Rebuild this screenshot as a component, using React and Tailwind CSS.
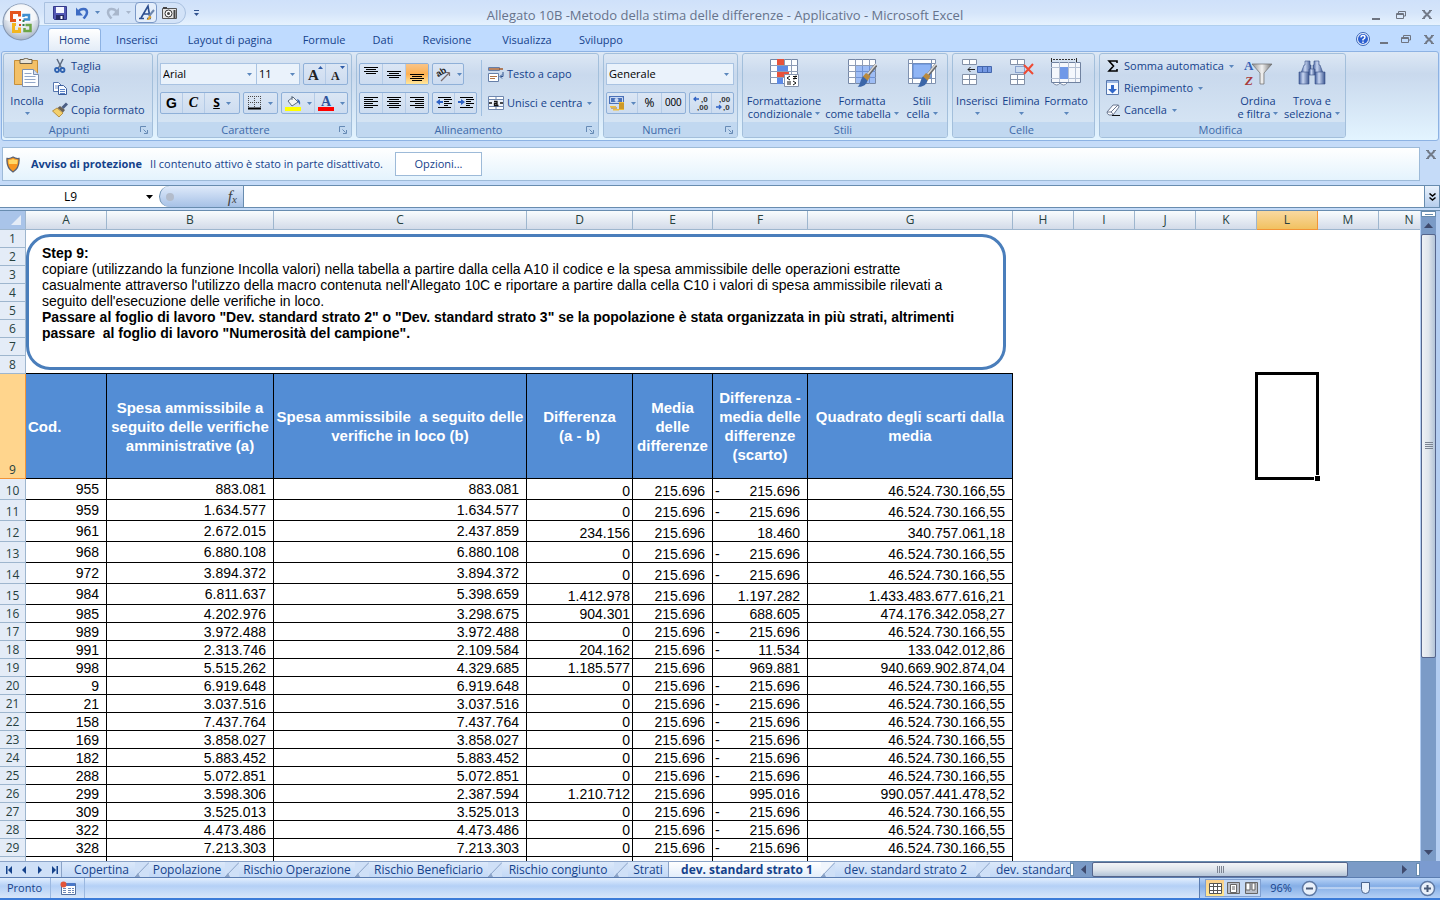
import clsx from 'clsx'

const COLUMNS = ['A', 'B', 'C', 'D', 'E', 'F', 'G', 'H', 'I', 'J', 'K', 'L', 'M', 'N']
const EMPTY_COLUMNS = COLUMNS.slice(7)

const ROWS = [
  ['955', '883.081', '883.081', '0', '-', '215.696', '46.524.730.166,55'],
  ['959', '1.634.577', '1.634.577', '0', '-', '215.696', '46.524.730.166,55'],
  ['961', '2.672.015', '2.437.859', '234.156', '', '18.460', '340.757.061,18'],
  ['968', '6.880.108', '6.880.108', '0', '-', '215.696', '46.524.730.166,55'],
  ['972', '3.894.372', '3.894.372', '0', '-', '215.696', '46.524.730.166,55'],
  ['984', '6.811.637', '5.398.659', '1.412.978', '', '1.197.282', '1.433.483.677.616,21'],
  ['985', '4.202.976', '3.298.675', '904.301', '', '688.605', '474.176.342.058,27'],
  ['989', '3.972.488', '3.972.488', '0', '-', '215.696', '46.524.730.166,55'],
  ['991', '2.313.746', '2.109.584', '204.162', '-', '11.534', '133.042.012,86'],
  ['998', '5.515.262', '4.329.685', '1.185.577', '', '969.881', '940.669.902.874,04'],
  ['9', '6.919.648', '6.919.648', '0', '-', '215.696', '46.524.730.166,55'],
  ['21', '3.037.516', '3.037.516', '0', '-', '215.696', '46.524.730.166,55'],
  ['158', '7.437.764', '7.437.764', '0', '-', '215.696', '46.524.730.166,55'],
  ['169', '3.858.027', '3.858.027', '0', '-', '215.696', '46.524.730.166,55'],
  ['182', '5.883.452', '5.883.452', '0', '-', '215.696', '46.524.730.166,55'],
  ['288', '5.072.851', '5.072.851', '0', '-', '215.696', '46.524.730.166,55'],
  ['299', '3.598.306', '2.387.594', '1.210.712', '', '995.016', '990.057.441.478,52'],
  ['309', '3.525.013', '3.525.013', '0', '-', '215.696', '46.524.730.166,55'],
  ['322', '4.473.486', '4.473.486', '0', '-', '215.696', '46.524.730.166,55'],
  ['328', '7.213.303', '7.213.303', '0', '-', '215.696', '46.524.730.166,55'],
]

const RIBBON_TABS = [
  ['Inserisci', 'w-[72px]'],
  ['Layout di pagina', 'w-[114px]'],
  ['Formule', 'w-[74px]'],
  ['Dati', 'w-[44px]'],
  ['Revisione', 'w-[84px]'],
  ['Visualizza', 'w-[76px]'],
  ['Sviluppo', 'w-[72px]'],
]

/* ---------- small drawings ---------- */

function Caret({ className = 'text-[#5b87bd]' }) {
  return (
    <svg className={clsx('shrink-0', className)} width="5" height="3" viewBox="0 0 5 3" aria-hidden="true">
      <path d="M0 0h5L2.5 3z" fill="currentColor" />
    </svg>
  )
}

function Icon({ w = 16, h = 16, children }) {
  return (
    <svg className="shrink-0" width={w} height={h} viewBox={`0 0 ${w} ${h}`} aria-hidden="true">
      {children}
    </svg>
  )
}

function OfficeLogo() {
  return (
    <svg width="40" height="40" viewBox="0 0 40 40" aria-hidden="true">
      <defs>
        <radialGradient id="orb" cx="50%" cy="35%" r="65%">
          <stop offset="0" stopColor="#ffffff" />
          <stop offset="0.6" stopColor="#e3e8ef" />
          <stop offset="1" stopColor="#a9b6c9" />
        </radialGradient>
      </defs>
      <circle cx="20" cy="20" r="18.5" fill="#8092ad" />
      <circle cx="20" cy="20" r="17.5" fill="url(#orb)" />
      <path d="M4 18a16 16 0 0 1 32 0q-16 5-32 0z" fill="#fff" opacity=".6" />
      <g fill="none" strokeWidth="3">
        <path d="M15 18.500h-4.500v-8h8v4" stroke="#e4541c" />
        <path d="M22.500 17.500h5.500v-4.500h-5.500v2" stroke="#3f8fd0" strokeWidth="2.500" />
        <path d="M15 22.500h-2.500v7h6v-4" stroke="#f3b61f" />
        <path d="M24.500 23h5v6h-6v-3" stroke="#6da545" strokeWidth="2.500" />
      </g>
      <path d="M18 17h2v2h-2z M18 22h2v2h-2z" fill="#d6432a" />
      <path d="M21.500 18h2v2h-2z M21.500 22h2v2h-2z" fill="#2d7a4f" />
    </svg>
  )
}

function SaveIcon() {
  return (
    <Icon>
      <path d="M1.500 1.500h13v13h-12l-1-1z" fill="#5358b4" stroke="#34398a" />
      <path d="M4 2h8v6H4z" fill="#f4f6ff" />
      <path d="M4 10h8v5H4z" fill="#252a66" />
      <path d="M8.500 11h2v3h-2z" fill="#fff" />
    </Icon>
  )
}

function UndoIcon({ color = '#3e6cc4', flip }) {
  return (
    <Icon w={14} h={14}>
      <g transform={flip ? 'matrix(-1 0 0 1 14 0)' : undefined}>
        <path d="M3 6C6 2 12 2 12 6.500c0 3-2 4-3.500 6" fill="none" stroke={color} strokeWidth="2.500" />
        <path d="M1 1.500v8h7z" fill={color} />
      </g>
    </Icon>
  )
}

function BrushLetterIcon() {
  return (
    <Icon w={17} h={17}>
      <path d="M1 14.500h5M9 14.500h4M3 14l7-12 2 12M5.500 10h5.500" fill="none" stroke="#2e4f8f" strokeWidth="1.600" />
      <path d="M16 6l-5 6" stroke="#6d87ad" strokeWidth="2" />
      <path d="M11.500 11.500l2 1.500c-1 2.500-3 3-5 3 1.500-1 1.500-3 3-4.500z" fill="#e0a32c" />
    </Icon>
  )
}

function CameraIcon() {
  return (
    <Icon w={17} h={14}>
      <path d="M1.500 2.500h14v10h-14z" fill="#e4e4e4" stroke="#555" />
      <path d="M2 1h4v2H2z M12.500 4h2v8h-2z" fill="#444" />
      <circle cx="7.500" cy="7.500" r="3.500" fill="#fff" stroke="#333" />
      <circle cx="7.500" cy="7.500" r="1.500" fill="#444" />
    </Icon>
  )
}

function PasteIcon() {
  return (
    <Icon w={30} h={30}>
      <path d="M2.500 2.500h23v24h-23z" fill="#f3c067" stroke="#c58f3a" />
      <path d="M8 1.500h3q3-3 6 0h3v4H8z" fill="#e9e4d8" stroke="#6b5f49" />
      <path d="M10.500 11.500h11l5 5v12h-16z" fill="#fdfeff" stroke="#7d90b0" />
      <path d="M21.500 11.500v5h5" fill="#d5dff0" stroke="#7d90b0" />
      <path d="M12.500 15.500h7M12.500 18.500h11M12.500 21.500h11M12.500 24.500h11" stroke="#93a7c8" />
    </Icon>
  )
}

function CutIcon() {
  return (
    <Icon>
      <path d="M5 1l4.500 9M11 1L6.500 10" stroke="#5e6c80" strokeWidth="1.500" />
      <circle cx="5" cy="12" r="2" fill="none" stroke="#2f62b0" strokeWidth="1.800" />
      <circle cx="10.500" cy="12" r="2" fill="none" stroke="#2f62b0" strokeWidth="1.800" />
    </Icon>
  )
}

function CopyIcon() {
  return (
    <Icon>
      <path d="M1.500 2.500h5l3 3v6h-8z" fill="#fff" stroke="#5575ae" />
      <path d="M3 6h4M3 8h4" stroke="#7c99cc" />
      <path d="M6.500 5.500h5l3 3v6h-8z" fill="#f5f9ff" stroke="#3c5f9e" />
      <path d="M8 9.500h5M8 11.500h5M8 13.500h5" stroke="#5b82c6" />
    </Icon>
  )
}

function PainterIcon() {
  return (
    <Icon>
      <path d="M15 1.500l-4.500 4.500" stroke="#4b5f86" strokeWidth="3" />
      <path d="M8 4l5 4-2 2.500-5.500-4.500z" fill="#6a6256" />
      <path d="M5 6l6 5-4 4-6.500-6z" fill="#f3cf6b" stroke="#a97e2c" strokeWidth=".8" />
    </Icon>
  )
}

function Lines({ rows, children }) {
  // rows: [y, x1, x2]
  return (
    <Icon w={16} h={14}>
      {rows.map(([y, x1, x2]) => (
        <path key={y} d={`M${x1} ${y}.5H${x2}`} stroke="#000" />
      ))}
      {children}
    </Icon>
  )
}

const V_LINES = [[1, 15], [3, 13], [1, 15], [3, 13]]
const ALIGN_TOP = V_LINES.map(([a, b], i) => [i * 2, a, b])
const ALIGN_MID = V_LINES.map(([a, b], i) => [i * 2 + 4, a, b])
const ALIGN_BOT = V_LINES.map(([a, b], i) => [i * 2 + 7, a, b])
const ALIGN_LEFT = [0, 1, 2, 3, 4, 5].map((i) => [i * 2 + 1, 1, i % 2 ? 10 : 15])
const ALIGN_CENTER = [0, 1, 2, 3, 4, 5].map((i) => [i * 2 + 1, i % 2 ? 3 : 1, i % 2 ? 13 : 15])
const ALIGN_RIGHT = [0, 1, 2, 3, 4, 5].map((i) => [i * 2 + 1, i % 2 ? 6 : 1, 15])
const INDENT = [[1, 2, 15], [3, 8, 16], [5, 8, 13], [7, 8, 16], [9, 8, 12], [11, 2, 15]]

function OrientationIcon() {
  return (
    <Icon w={16} h={16}>
      <text x="2" y="10" fontSize="9" fontWeight="bold" fontFamily="Liberation Sans" fill="#222" transform="rotate(-30 5 9)">ab</text>
      <path d="M6 15l8-8M14.500 6.500v3.500M14.500 6.500H11" stroke="#7a6a6a" strokeWidth="1.200" fill="none" />
    </Icon>
  )
}

function WrapIcon() {
  return (
    <Icon>
      <path d="M.5 1.500h11v3H.5z M.5 7.500h10v8H.5z" fill="#fff" stroke="#667fa8" />
      <path d="M1 3h14" stroke="#a35a2a" strokeWidth="1.500" />
      <path d="M2 10.500h7M2 12.500h5" stroke="#b07446" />
      <path d="M15 6v4.500H12.500M14 8.500l-2 2 2 2" stroke="#31538f" fill="none" />
    </Icon>
  )
}

function MergeIcon() {
  return (
    <Icon>
      <path d="M.5 1.500h15v13H.5z M.5 4.500h15M.5 11.500h15M8 1.500v3M8 11.500v3" fill="#fff" stroke="#6f87ae" />
      <path d="M1 5h14v6H1z" fill="#eef3fb" />
      <path d="M1 8h3M15 8h-3" stroke="#111" strokeWidth="1.500" />
      <path d="M6 6.500h3v4H6.500v-2H9M9 10.500h1.500" fill="none" stroke="#111" strokeWidth="1.300" />
    </Icon>
  )
}

function BordersIcon() {
  return (
    <Icon w={14} h={14}>
      <path d="M.5 0v12M6.500 0v12M12.500 0v12M0 .5h13M0 6.500h13" stroke="#4a4a4a" strokeDasharray="1 1" />
      <path d="M0 12.500h13" stroke="#000" strokeWidth="2" />
    </Icon>
  )
}

function FillColorIcon() {
  return (
    <Icon w={16} h={16}>
      <path d="M3 6l5-4 5 5-6 4z" fill="#f4f6f8" stroke="#5c6c80" />
      <path d="M7 5V1" stroke="#5c6c80" />
      <path d="M12 4q4 1 3 6l-2-3z" fill="#3565b5" />
      <path d="M0 12h16v4H0z" fill="#ff0" />
    </Icon>
  )
}

function FontColorIcon() {
  return (
    <Icon w={16} h={16}>
      <text x="3" y="11" fontSize="14" fontWeight="bold" fontFamily="Liberation Serif" fill="#2f539b">A</text>
      <path d="M0 12h16v4H0z" fill="#f00" />
    </Icon>
  )
}

function CurrencyIcon() {
  return (
    <Icon w={17} h={16}>
      <path d="M1 1h15v8H1z" fill="#4a71b8" />
      <path d="M2.500 2.500h12v5h-12z" fill="none" stroke="#c9d9f3" />
      <circle cx="8.500" cy="5" r="2" fill="#c9d9f3" />
      <path d="M11 7h5v8h-5z" fill="#f0bd3b" />
      <path d="M11 9h5M11 11h5M11 13h5M3 13h6" stroke="#a9771a" />
      <path d="M2 11h6v1.500H2z M5 14h6v1.500H5z" fill="#f0bd3b" />
    </Icon>
  )
}

function DecimalsIcon({ top, bottom, left }) {
  return (
    <Icon w={16} h={16}>
      <text x={left ? 8 : 4} y="7" fontSize="8" fontFamily="Liberation Sans" fontWeight="bold" fill="#333">{top}</text>
      <text x={left ? 4 : 8} y="15" fontSize="8" fontFamily="Liberation Sans" fontWeight="bold" fill="#333">{bottom}</text>
      {left ? (
        <path d="M1 4h5M3 2L1 4l2 2" stroke="#2f62c4" strokeWidth="1.300" fill="none" />
      ) : (
        <path d="M1 12h5M4 10l2 2-2 2" stroke="#2f62c4" strokeWidth="1.300" fill="none" />
      )}
    </Icon>
  )
}

function GridBase() {
  return (
    <>
      <path d="M1.500 1.500h27v24h-27z" fill="#fdfeff" stroke="#7688a6" />
      <path d="M1 7.500h28M1 13.500h28M1 19.500h28M8.500 1v25M15.500 1v25M22.500 1v25" stroke="#8d9cb7" />
    </>
  )
}

function Brush() {
  return (
    <>
      <path d="M29 7l-9 11" stroke="#6a6a6a" strokeWidth="3.500" />
      <path d="M29 6l-9 11" stroke="#d9d9d9" strokeWidth="1.500" />
      <path d="M19 15l4.500 3-3 5-5-4z" fill="#b98a3e" />
      <path d="M16 18.500l4.500 4c-1 5-6 7-10 6 3-1 2.500-7 5.500-10z" fill="#3b66a8" />
    </>
  )
}

function ConditionalIcon() {
  return (
    <Icon w={30} h={30}>
      <GridBase />
      <path d="M8 1h7v6H8z M8 14h12v5H8z" fill="#e8523b" />
      <path d="M8 8h11v5H8z M8 20h6v6H8z" fill="#5d8ae6" />
      <path d="M15.500 16.500h14v12h-14z" fill="#fff" stroke="#8493ad" />
      <path d="M21 18l-3 2 3 2M18 24h4M18 26h4M24 18.500h4M24 20.500h4M27 17.500l-2 4M24 23l3 2-3 2" stroke="#111" fill="none" />
    </Icon>
  )
}

function FormatTableIcon() {
  return (
    <Icon w={30} h={30}>
      <GridBase />
      <path d="M9 8h19v17H9z" fill="#7da7f2" opacity=".75" />
      <path d="M9 13.500h19M9 19.500h19M15.500 8v17M22.500 8v17" stroke="#6d92d6" />
      <Brush />
    </Icon>
  )
}

function CellStyleIcon() {
  return (
    <Icon w={30} h={30}>
      <path d="M1.500 1.500h27v24h-27z M1 5.500h28M1 20.500h28M5.500 1v25M24.500 1v25" fill="#fdfeff" stroke="#8092b0" />
      <path d="M6 6h18v14H6z" fill="#8fb5f5" stroke="#5f88cf" />
      <Brush />
    </Icon>
  )
}

function InsertCellsIcon() {
  return (
    <Icon w={32} h={30}>
      <path d="M1.500 1.500h14v5h-14z M8.500 1.500v5 M1.500 16.500h14v10h-14z M8.500 16.500v10 M1.500 21.500h14" fill="#fdfeff" stroke="#8391a8" />
      <path d="M16.500 8.500h14v6h-14z M21.500 8.500v6 M26.500 8.500v6" fill="#7397e3" stroke="#4467ad" />
      <path d="M14 11.500H7M9.500 9L7 11.500 9.500 14" stroke="#222" fill="none" />
    </Icon>
  )
}

function DeleteCellsIcon() {
  return (
    <Icon w={30} h={30}>
      <path d="M4.500 1.500h14v5h-14z M11.500 1.500v5 M4.500 16.500h14v10h-14z M11.500 16.500v10 M4.500 21.500h14" fill="#fdfeff" stroke="#8391a8" />
      <path d="M9.500 8.500h9v6h-9z" fill="none" stroke="#4467ad" strokeDasharray="1 1" />
      <path d="M18 7l9 9M27 6l-9 10" stroke="#ee4a33" strokeWidth="2" />
    </Icon>
  )
}

function FormatCellsIcon() {
  return (
    <Icon w={32} h={30}>
      <path d="M1.500 0v4M26.500 0v4" stroke="#333" />
      <path d="M3 1.500h22" stroke="#333" strokeDasharray="2 1" />
      <path d="M1.500 4.500h29v20h-29z" fill="#f4f7fc" stroke="#7082a0" />
      <path d="M1 9.500h29M1 20.500h29M9.500 4v20M18.500 4v20M25.500 4v20" stroke="#b3bfd3" />
      <path d="M10 9h8v12h-8z" fill="#6f98e8" />
      <path d="M3 25q4 4 7 0q4 4 7 0" stroke="#8090aa" fill="#fff" />
    </Icon>
  )
}

function FillDownIcon() {
  return (
    <Icon w={14} h={16}>
      <path d="M.5.5h12v14H.5z" fill="#f4f8ff" stroke="#5677ad" />
      <path d="M1 1h11v2H1z" fill="#9db9e6" />
      <path d="M5 5h3v4h3l-4.500 4.500L2 9h3z" fill="#2f66c9" />
    </Icon>
  )
}

function EraserIcon() {
  return (
    <Icon w={14} h={14}>
      <path d="M1 9l6-7h5.500q1.500 2-1 4L7 12H3q-2-1-2-3z" fill="#fbfcff" stroke="#6c7890" />
      <path d="M1 9h4q2 1 2 3M5 9l7-7" stroke="#6c7890" fill="none" />
      <path d="M6 12.500h8" stroke="#111" />
    </Icon>
  )
}

function SortFilterIcon() {
  return (
    <Icon w={30} h={30}>
      <defs>
        <linearGradient id="funnel">
          <stop offset="0" stopColor="#8f8f8f" />
          <stop offset=".5" stopColor="#f2f2f2" />
          <stop offset="1" stopColor="#707070" />
        </linearGradient>
      </defs>
      <path d="M9 6h20l-8 9v11h-4V15z" fill="url(#funnel)" stroke="#6b6b6b" strokeWidth=".7" />
      <text x="1" y="12" fontSize="13" fontWeight="bold" fontFamily="Liberation Serif" fill="#3460b4">A</text>
      <text x="2" y="27" fontSize="13" fontWeight="bold" fontStyle="italic" fontFamily="Liberation Serif" fill="#a83a3a">Z</text>
    </Icon>
  )
}

function BinocularsIcon() {
  return (
    <Icon w={30} h={30}>
      <defs>
        <linearGradient id="tube">
          <stop offset="0" stopColor="#3f5c9a" />
          <stop offset=".4" stopColor="#c8d6f2" />
          <stop offset="1" stopColor="#3c568f" />
        </linearGradient>
      </defs>
      <g fill="url(#tube)" stroke="#3a5288" strokeWidth=".6">
        <path d="M8 3h5v4h1v8H4l3-8h1z" />
        <path d="M17 3h5v4h1l3 8H16V7h1z" />
        <path d="M2 14h10v12H2z" />
        <path d="M18 14h10v12H18z" />
        <path d="M12 11h6v6h-6z" />
      </g>
    </Icon>
  )
}

function ShieldIcon() {
  return (
    <Icon w={14} h={17}>
      <path d="M7 1q3 2 6 1.500C13.500 9 12 13 7 16 2 13 .5 9 1 2.500 4 3 5 2 7 1z" fill="#f7951e" stroke="#5b6272" strokeWidth="1.300" />
      <path d="M2.500 4Q5 4 7 3q2 1 4.500 1 0 3-.5 4H3q-.5-1-.5-4z" fill="#ffd766" />
    </Icon>
  )
}

function MacroIcon() {
  return (
    <Icon w={16} h={14}>
      <path d="M1.500 2.500h14v11h-14z" fill="#fff" stroke="#54719f" />
      <path d="M5 2h10v3H5z" fill="#4a78c8" />
      <path d="M3 7.500h3M8 7.500h3M12 7.500h2M3 9.500h3M8 9.500h3M12 9.500h2M3 11.500h3M8 11.500h3M12 11.500h2" stroke="#6c86b5" />
      <circle cx="3.500" cy="3.500" r="3" fill="#e2553a" />
    </Icon>
  )
}

/* ---------- window chrome ---------- */

function WindowButtons({ className }) {
  return (
    <div className={clsx('flex items-center', className)}>
      <button type="button" aria-label="Riduci a icona" className="flex h-3 w-2 items-end pb-px">
        <span className="h-0.5 w-2 bg-[#6e7480]" />
      </button>
      <button type="button" aria-label="Ripristina">
        <Icon w={10} h={8}>
          <path d="M2.500 3V.5h7v4.500H8M.5 2.500h7v5h-7zM.5 3.500h7" fill="none" stroke="#6e7480" />
        </Icon>
      </button>
      <CloseButton label="Chiudi" />
    </div>
  )
}

function CloseButton({ label }) {
  return (
    <button type="button" aria-label={label}>
      <Icon w={10} h={9}>
        <path d="M1.500 1l7 7M8.500 1l-7 7" stroke="#727a88" strokeWidth="2" />
        <path d="M0 .5h3M7 .5h3M0 8.500h3M7 8.500h3" stroke="#727a88" />
      </Icon>
    </button>
  )
}

function TitleBar() {
  return (
    <header className="flex h-[26px] shrink-0 items-center border-b border-[#b0cfee] bg-linear-to-b from-[#cfe1fa] via-[#d5e5fa] to-[#e6f2fe] pr-2">
      <div className="ml-11 flex h-[22px] w-[142px] shrink-0 items-center rounded-r-full border border-[#a9c1e0] bg-[#d3e3f8] pl-[7px]">
        <button type="button" aria-label="Salva"><SaveIcon /></button>
        <button type="button" aria-label="Annulla" className="ml-[7px] flex items-center gap-1.5">
          <UndoIcon />
          <Caret />
        </button>
        <button type="button" aria-label="Ripeti" className="ml-1.5 flex items-center gap-1.5">
          <UndoIcon flip color="#a9b7cc" />
          <Caret className="text-[#a9b7cc]" />
        </button>
        <button type="button" aria-label="Stile carattere" className="ml-1 flex h-[21px] w-[22px] shrink-0 items-center justify-center rounded-sm border border-[#7b99c8] bg-[#e4eefb]">
          <BrushLetterIcon />
        </button>
        <button type="button" aria-label="Fotocamera" className="ml-1"><CameraIcon /></button>
      </div>
      <button type="button" aria-label="Personalizza barra" className="flex w-5 shrink-0 flex-col items-center gap-0.5">
        <span className="h-px w-[5px] bg-[#31538f]" />
        <Caret className="text-[#31538f]" />
      </button>
      <h1 className="grow truncate pr-32 pt-1 text-center text-[13px] leading-5 text-[#66738c]">
        Allegato 10B -Metodo della stima delle differenze - Applicativo - Microsoft Excel
      </h1>
      <WindowButtons className="gap-4 pt-1" />
    </header>
  )
}

function RibbonTabs() {
  return (
    <nav className="flex h-[25px] shrink-0 items-end bg-[#bfdbff] pl-12 pr-1.5">
      <button type="button" className="h-[23px] w-[53px] rounded-t-[3px] border border-b-0 border-[#8db2e3] bg-linear-to-b from-white to-[#e3ecf7]">
        Home
      </button>
      {RIBBON_TABS.map(([label, width]) => (
        <button key={label} type="button" className={clsx('h-[23px] whitespace-nowrap', width)}>
          {label}
        </button>
      ))}
      <div className="ml-auto flex h-6 items-center gap-2.5">
        <button type="button" aria-label="Guida">
          <Icon w={14} h={14}>
            <circle cx="7" cy="7" r="6.500" fill="#e8f0fd" stroke="#3c66b5" />
            <circle cx="7" cy="7" r="5" fill="#2c5fd0" />
            <path d="M5 5.500q0-2 2-2t2 1.700q0 1-2 2.300V8.500M7 9.500v1.500" fill="none" stroke="#fff" strokeWidth="1.400" />
          </Icon>
        </button>
        <WindowButtons className="gap-[13px]" />
      </div>
    </nav>
  )
}

/* ---------- ribbon ---------- */

function Group({ label, className, launcher, children }) {
  return (
    <section
      aria-label={label}
      className={clsx('flex shrink-0 flex-col overflow-hidden rounded-[3px] border border-[#a3bfdb] bg-linear-to-b from-[#dce7f4] from-0% via-[#c9d9ed] via-25% to-[#d8e7f5]', className)}
    >
      <div className="flex h-[68px] shrink-0 items-start">{children}</div>
      <div className="flex grow items-center bg-[#c1d8f0] pr-1 text-[#3e6aaa]">
        <span className={clsx('grow text-center leading-4', launcher && 'pr-1.5')}>{label}</span>
        {launcher && (
          <button type="button" aria-label={`Opzioni ${label}`}>
            <Icon w={8} h={8}>
              <path d="M.5 6V.5H6M3.500 3.500l3 3M7.500 4v3.500H4" fill="none" stroke="#668ab5" />
            </Icon>
          </button>
        )}
      </div>
    </section>
  )
}

function SmallButton({ icon, caret, children }) {
  return (
    <button type="button" className="flex h-[22px] items-center gap-[3px] whitespace-nowrap text-left">
      <span className="flex w-4 shrink-0 justify-center">{icon}</span>
      <span>{children}</span>
      {caret && <Caret className="ml-0.5 text-[#5b87bd]" />}
    </button>
  )
}

function LargeButton({ icon, lines, className }) {
  const [first, second] = lines
  return (
    <button type="button" className={clsx('flex h-[66px] shrink-0 flex-col items-center whitespace-nowrap pt-1 leading-[13px]', className)}>
      <span className="mb-1.5 flex h-[30px]">{icon}</span>
      <span>{first}</span>
      <span className="flex h-[13px] items-center gap-[3px]">
        {second}
        <Caret />
      </span>
    </button>
  )
}

function Box({ className, children }) {
  return (
    <div className={clsx('flex h-[22px] items-stretch divide-x divide-[#b5cbe6] rounded-[2px] border border-[#8fb0d8] bg-linear-to-b from-[#dbe6f4] to-[#cddcf0]', className)}>
      {children}
    </div>
  )
}

function BoxButton({ label, className, caret, children }) {
  return (
    <button type="button" aria-label={label} className={clsx('flex grow items-center justify-center gap-1.5 text-black', className)}>
      {children}
      {caret && <Caret />}
    </button>
  )
}

function Combo({ label, value, className }) {
  return (
    <div className={clsx('relative flex h-[22px] items-center border border-[#a9c3e2] bg-[#eaf2fb]', className)}>
      <select aria-label={label} className="h-full w-full appearance-none px-0.5 text-[11px] text-black outline-none" defaultValue={value}>
        <option>{value}</option>
      </select>
      <span className="pointer-events-none absolute right-1">
        <Caret />
      </span>
    </div>
  )
}

function Ribbon() {
  return (
    <div className="mx-px flex h-[90px] shrink-0 gap-1 overflow-hidden rounded-[3px] border border-[#8db2e3] bg-linear-to-b from-[#dde8f5] from-0% via-[#c9d9ed] via-25% to-[#e3f4ff] pb-0.5 pl-px pt-px">
      <Group label="Appunti" className="w-[150px]" launcher>
        <LargeButton icon={<PasteIcon />} lines={['Incolla']} className="w-[46px]" />
        <div className="flex flex-col pl-0.5 pt-px">
          <SmallButton icon={<CutIcon />}>Taglia</SmallButton>
          <SmallButton icon={<CopyIcon />}>Copia</SmallButton>
          <SmallButton icon={<PainterIcon />}>Copia formato</SmallButton>
        </div>
      </Group>

      <Group label="Carattere" className="w-[195px]" launcher>
        <div className="flex flex-col gap-[7px] pl-0.5 pt-[9px]">
          <div className="flex">
            <Combo label="Tipo di carattere" value="Arial" className="w-[97px]" />
            <Combo label="Dimensione" value="11" className="w-[43px] border-l-0" />
            <Box className="ml-[3px] w-[45px]">
              <BoxButton label="Aumenta dimensione carattere">
                <Icon w={16} h={16}>
                  <text x="1" y="14" fontSize="15" fontWeight="bold" fontFamily="Liberation Serif" fill="#222">A</text>
                  <path d="M11 3h5l-2.500-3z" fill="#2f5ca8" />
                </Icon>
              </BoxButton>
              <BoxButton label="Riduci dimensione carattere">
                <Icon w={16} h={16}>
                  <text x="2" y="14" fontSize="12" fontWeight="bold" fontFamily="Liberation Serif" fill="#222">A</text>
                  <path d="M11 0h5l-2.500 3z" fill="#2f5ca8" />
                </Icon>
              </BoxButton>
            </Box>
          </div>
          <div className="flex gap-[3px]">
            <Box className="w-20">
              <BoxButton className="w-[22px] font-['Liberation_Sans',sans-serif] text-sm font-extrabold">G</BoxButton>
              <BoxButton className="w-[22px] font-['Liberation_Serif',serif] text-sm font-bold italic">C</BoxButton>
              <BoxButton className="w-[34px] text-xs font-bold" caret><span className="underline">S</span></BoxButton>
            </Box>
            <Box className="w-[35px]">
              <BoxButton label="Bordi" caret><BordersIcon /></BoxButton>
            </Box>
            <Box className="w-[67px]">
              <BoxButton label="Colore riempimento" caret><FillColorIcon /></BoxButton>
              <BoxButton label="Colore carattere" caret><FontColorIcon /></BoxButton>
            </Box>
          </div>
        </div>
      </Group>

      <Group label="Allineamento" className="w-[243px]" launcher>
        <div className="flex flex-col gap-[7px] pl-0.5 pt-[9px]">
          <div className="flex gap-[3px]">
            <Box className="w-[70px]">
              <BoxButton label="Allinea in alto"><Lines rows={ALIGN_TOP} /></BoxButton>
              <BoxButton label="Allinea al centro verticale"><Lines rows={ALIGN_MID} /></BoxButton>
              <BoxButton label="Allinea in basso" className="bg-linear-to-b from-[#f9c487] via-[#fdb04f] to-[#ffe79b]">
                <Lines rows={ALIGN_BOT} />
              </BoxButton>
            </Box>
            <Box className="w-8">
              <BoxButton label="Orientamento" caret><OrientationIcon /></BoxButton>
            </Box>
          </div>
          <div className="flex gap-[3px]">
            <Box className="w-[70px]">
              <BoxButton label="Allinea a sinistra"><Lines rows={ALIGN_LEFT} /></BoxButton>
              <BoxButton label="Centra"><Lines rows={ALIGN_CENTER} /></BoxButton>
              <BoxButton label="Allinea a destra"><Lines rows={ALIGN_RIGHT} /></BoxButton>
            </Box>
            <Box className="w-[45px]">
              <BoxButton label="Riduci rientro">
                <Lines rows={INDENT}><path d="M0 6l4-3v2h3v2H4v2z" fill="#2f62c4" /></Lines>
              </BoxButton>
              <BoxButton label="Aumenta rientro">
                <Lines rows={INDENT}><path d="M7 6L3 3v2H0v2h3v2z" fill="#2f62c4" /></Lines>
              </BoxButton>
            </Box>
          </div>
        </div>
        <div className="ml-1 mt-1.5 h-14 w-px bg-[#a0bfe0]" />
        <div className="flex flex-col gap-[7px] pl-1.5 pt-[9px]">
          <SmallButton icon={<WrapIcon />}>Testo a capo</SmallButton>
          <SmallButton icon={<MergeIcon />} caret>Unisci e centra</SmallButton>
        </div>
      </Group>

      <Group label="Numeri" className="w-[135px]" launcher>
        <div className="flex flex-col gap-[7px] pl-0.5 pt-[9px]">
          <Combo label="Formato numero" value="Generale" className="w-[128px]" />
          <div className="flex gap-[3px]">
            <Box className="w-20">
              <BoxButton label="Formato contabilità" className="w-8" caret><CurrencyIcon /></BoxButton>
              <BoxButton className="w-6 text-xs">%</BoxButton>
              <BoxButton className="w-6 font-['Liberation_Sans',sans-serif] text-[10px]">000</BoxButton>
            </Box>
            <Box className="w-[45px]">
              <BoxButton label="Aumenta decimali"><DecimalsIcon left top=",0" bottom=",00" /></BoxButton>
              <BoxButton label="Diminuisci decimali"><DecimalsIcon top=",00" bottom=",0" /></BoxButton>
            </Box>
          </div>
        </div>
      </Group>

      <Group label="Stili" className="w-[206px]">
        <LargeButton icon={<ConditionalIcon />} lines={['Formattazione', 'condizionale']} className="w-[82px]" />
        <LargeButton icon={<FormatTableIcon />} lines={['Formatta', 'come tabella']} className="w-[74px]" />
        <LargeButton icon={<CellStyleIcon />} lines={['Stili', 'cella']} className="w-[46px]" />
      </Group>

      <Group label="Celle" className="w-[143px]">
        <LargeButton icon={<InsertCellsIcon />} lines={['Inserisci']} className="w-[48px]" />
        <LargeButton icon={<DeleteCellsIcon />} lines={['Elimina']} className="w-[40px]" />
        <LargeButton icon={<FormatCellsIcon />} lines={['Formato']} className="w-[50px]" />
      </Group>

      <Group label="Modifica" className="w-[247px]">
        <div className="flex w-[135px] shrink-0 flex-col pl-[5px] pt-px">
          <SmallButton
            caret
            icon={(
              <Icon w={12} h={12}>
                <path d="M10 3V1H2l4.500 5L2 11h8V9" fill="none" stroke="#000" strokeWidth="1.600" />
              </Icon>
            )}
          >
            Somma automatica
          </SmallButton>
          <SmallButton caret icon={<FillDownIcon />}>Riempimento</SmallButton>
          <SmallButton caret icon={<EraserIcon />}>Cancella</SmallButton>
        </div>
        <LargeButton icon={<SortFilterIcon />} lines={['Ordina', 'e filtra']} className="w-[46px]" />
        <LargeButton icon={<BinocularsIcon />} lines={['Trova e', 'seleziona']} className="w-[62px]" />
      </Group>
    </div>
  )
}

function SecurityBar() {
  return (
    <div className="flex shrink-0 items-start pb-1 pl-0.5 pr-1 pt-1.5">
      <div className="flex h-[34px] grow items-center border border-[#9dbad8] bg-linear-to-b from-white to-[#e4f3fd] pl-[3px]">
        <ShieldIcon />
        <strong className="ml-[11px] font-bold">Avviso di protezione</strong>
        <span className="ml-2 mr-2.5">Il contenuto attivo è stato in parte disattivato.</span>
        <button type="button" className="ml-0.5 h-6 w-[87px] border border-[#9dbad8] bg-white">Opzioni...</button>
      </div>
      <div className="ml-1.5">
        <CloseButton label="Chiudi avviso" />
      </div>
    </div>
  )
}

function FormulaBar() {
  return (
    <div className="flex h-[23px] shrink-0 border-y border-[#688caf] bg-white text-xs">
      <label className="flex w-[159px] shrink-0 items-center pr-1.5">
        <span className="sr-only">Casella nome</span>
        <input className="h-full w-[141px] text-center text-xs text-black outline-none" defaultValue="L9" />
        <svg className="ml-auto" width="7" height="4" viewBox="0 0 7 4" aria-hidden="true"><path d="M0 0h7L3.500 4z" /></svg>
      </label>
      <div className="flex w-[85px] shrink-0 items-center justify-between rounded-l-full border-r border-l border-[#688caf] bg-linear-to-b from-[#dfeafa] to-[#a6c1e6] px-1.5">
        <span className="size-2 rounded-full bg-[#b3bccb]" />
        <button type="button" aria-label="Inserisci funzione" className="flex items-center font-['Liberation_Serif',serif] text-base leading-4 italic text-[#444]">
          <span>f</span>
          <span className="pt-1 text-[11px]">x</span>
        </button>
      </div>
      <input aria-label="Barra della formula" className="min-w-0 grow px-1 text-black outline-none" />
      <button type="button" aria-label="Espandi barra della formula" className="flex w-4 items-center justify-center border border-y-0 border-[#688caf] bg-linear-to-b from-[#eaf2fc] to-[#b5cdec]">
        <Icon w={7} h={8}>
          <path d="M.5.5l3 2.500 3-2.500M.5 4.500l3 2.500 3-2.500" fill="none" stroke="#000" strokeWidth="1.500" />
        </Icon>
      </button>
    </div>
  )
}

/* ---------- sheet ---------- */

function RowHeader({ n, active }) {
  return (
    <th
      scope="row"
      className={clsx(
        "border-b border-r p-0 text-center align-bottom font-['Open_Sans',sans-serif] text-xs leading-4 font-normal text-[#27413e]",
        active ? 'border-[#f29436] bg-[#ffd58d]' : 'border-[#9eb6ce] bg-[#e4ecf7]',
      )}
    >
      {n}
    </th>
  )
}

function HeadCell({ children, className }) {
  return (
    <th scope="col" className={clsx('border-b border-r border-black bg-[#538dd5] p-0 align-middle text-[15px] leading-[19px] font-bold text-white', className)}>
      {children}
    </th>
  )
}

function NoteBox() {
  return (
    <div className="mb-[3px] mt-1 h-[136px] w-[980px] rounded-[24px] border-3 border-[#4a7ebb] bg-white pl-[13px] pt-2 text-sm leading-4 whitespace-pre text-black">
      <p className="font-bold">Step 9:</p>
      <p>copiare (utilizzando la funzione Incolla valori) nella tabella a partire dalla cella A10 il codice e la spesa ammissibile delle operazioni estratte</p>
      <p>casualmente attraverso l'utilizzo della macro contenuta nell'Allegato 10C e riportare a partire dalla cella C10 i valori di spesa ammissibile rilevati a</p>
      <p>seguito dell'esecuzione delle verifiche in loco.</p>
      <p className="font-bold">Passare al foglio di lavoro "Dev. standard strato 2" o "Dev. standard strato 3" se la popolazione è stata organizzata in più strati, altrimenti</p>
      <p className="font-bold">passare  al foglio di lavoro "Numerosità del campione".</p>
    </div>
  )
}

function Sheet() {
  const cell = 'border-b border-r border-black p-0'
  return (
    <div className="min-w-0 grow overflow-hidden bg-white font-['Liberation_Sans',Arial,sans-serif]">
      <table className="w-[1440px] table-fixed border-separate border-spacing-0 text-sm leading-4 text-black">
        <colgroup>
          <col className="w-[26px]" />
          <col className="w-[81px]" />
          <col className="w-[167px]" />
          <col className="w-[253px]" />
          <col className="w-[106px]" />
          <col className="w-20" />
          <col className="w-[95px]" />
          <col className="w-[205px]" />
          {EMPTY_COLUMNS.map((c) => <col key={c} className="w-[61px]" />)}
        </colgroup>
        <thead className="font-['Open_Sans',sans-serif] text-xs text-[#27413e]">
          <tr className="h-[19px]">
            <td className="border-b border-r border-[#9eb6ce] bg-[#a9c4e9] p-0">
              <svg className="ml-auto mr-1" width="10" height="10" viewBox="0 0 10 10" aria-hidden="true"><path d="M10 0v10H0z" fill="#e4ecf7" /></svg>
            </td>
            {COLUMNS.map((c) => (
              <th
                key={c}
                scope="col"
                className={clsx(
                  'border-b border-r bg-linear-to-b p-0 text-center font-normal',
                  c === 'L' ? 'border-[#f29436] from-[#f9d99f] to-[#f1c15f]' : 'border-[#9eb6ce] from-[#f9fcfd] to-[#d3dbe9]',
                )}
              >
                {c}
              </th>
            ))}
          </tr>
        </thead>
        <tbody>
          {[1, 2, 3, 4, 5, 6, 7, 8].map((n) => (
            <tr key={n} className="h-[18px]">
              <RowHeader n={n} />
              {n === 1 && (
                <td colSpan={7} rowSpan={8} className="border-b border-black p-0 align-top">
                  <NoteBox />
                </td>
              )}
              {EMPTY_COLUMNS.map((c) => <td key={c} className="p-0" />)}
            </tr>
          ))}
          <tr className="h-[105px]">
            <RowHeader n={9} active />
            <HeadCell className="pl-0.5 text-left">Cod.</HeadCell>
            <HeadCell>Spesa ammissibile a<br />seguito delle verifiche<br />amministrative (a)</HeadCell>
            <HeadCell className="whitespace-pre">Spesa ammissibile  a seguito delle<br />verifiche in loco (b)</HeadCell>
            <HeadCell>Differenza<br />(a - b)</HeadCell>
            <HeadCell>Media<br />delle<br />differenze</HeadCell>
            <HeadCell>Differenza -<br />media delle<br />differenze<br />(scarto)</HeadCell>
            <HeadCell>Quadrato degli scarti dalla<br />media</HeadCell>
            {EMPTY_COLUMNS.map((c) => (
              <td key={c} className="relative p-0">
                {c === 'L' && (
                  <>
                    <div className="absolute -bottom-px -left-0.5 -right-px -top-0.5 border-3 border-black" />
                    <div className="absolute -bottom-[3px] -right-[3px] size-[7px] border border-white bg-black" />
                  </>
                )}
              </td>
            ))}
          </tr>
          {ROWS.map(([code, admin, onSite, diff, sign, gap, square], i) => {
            // the first rows are taller and keep their input columns centred
            const tall = i < 6
            const inputCell = clsx(cell, 'pr-[7px]', tall ? 'align-middle' : 'align-bottom')
            return (
              <tr key={code} className={clsx('text-right', tall ? 'h-[21px]' : 'h-[18px]')}>
                <RowHeader n={i + 10} />
                <td className={inputCell}>{code}</td>
                <td className={inputCell}>{admin}</td>
                <td className={inputCell}>{onSite}</td>
                <td className={clsx(cell, 'pr-0.5 align-bottom')}>{diff}</td>
                <td className={clsx(cell, 'pr-[7px] align-bottom')}>215.696</td>
                <td className={clsx(cell, 'pl-0.5 pr-[7px] align-bottom')}>
                  <div className="flex justify-between">
                    <span>{sign}</span>
                    <span>{gap}</span>
                  </div>
                </td>
                <td className={clsx(cell, 'pr-[7px] align-bottom')}>{square}</td>
              </tr>
            )
          })}
          <tr className="h-[18px]">
            <RowHeader />
            {COLUMNS.slice(0, 7).map((c) => <td key={c} className={cell} />)}
          </tr>
        </tbody>
      </table>
    </div>
  )
}

function VerticalScroll() {
  return (
    <div className="flex w-5 shrink-0 flex-col border-r-4 border-l border-[#b3cdf1] bg-[#7b9bc7]">
      <div className="flex h-1.5 items-center justify-center border border-[#688caf] bg-white">
        <span className="h-px w-2 bg-[#688caf]" />
      </div>
      <button type="button" aria-label="Scorri in alto" className="flex h-[17px] items-center justify-center">
        <svg width="9" height="5" viewBox="0 0 9 5" aria-hidden="true"><path d="M0 5h9L4.500 0z" fill="#3f4a6d" /></svg>
      </button>
      <div className="flex grow-[423] basis-0 flex-col items-center justify-center gap-px rounded-[2px] border border-[#55658c] bg-linear-to-r from-[#eef1f5] via-[#dfe5ec] to-[#b3c4d8]">
        <span className="h-px w-2 bg-[#7c8492]" />
        <span className="h-px w-2 bg-[#7c8492]" />
        <span className="h-px w-2 bg-[#7c8492]" />
        <span className="h-px w-2 bg-[#7c8492]" />
      </div>
      <div className="grow-[187] basis-0" />
      <button type="button" aria-label="Scorri in basso" className="flex h-[17px] items-center justify-center">
        <svg width="9" height="5" viewBox="0 0 9 5" aria-hidden="true"><path d="M0 0h9L4.500 5z" fill="#3f4a6d" /></svg>
      </button>
    </div>
  )
}

/* ---------- sheet tabs and status bar ---------- */

const SHEET_TABS = [
  { name: 'Copertina', width: 'w-[73px] pl-1.5' },
  { name: 'Popolazione', width: 'w-[76px]' },
  { name: 'Rischio Operazione', width: 'w-[116px]' },
  { name: 'Rischio Beneficiario', width: 'w-[119px]' },
  { name: 'Rischio congiunto', width: 'w-[112px]' },
  { name: 'Strati', width: 'w-[41px]', last: true },
  { name: 'dev. standard strato 1', width: 'w-[152px]', active: true },
  { name: 'dev. standard strato 2', width: 'w-[141px]' },
  { name: 'dev. standard strato 3', width: 'w-[160px]', cut: true },
]

function Slash({ before, after }) {
  return (
    <svg className="shrink-0" width="14" height="15" viewBox="0 0 14 15" aria-hidden="true">
      <path d="M0 0h14L1 15H0z" fill={before ? '#f1f6fd' : '#cfe0f7'} />
      <path d="M14 0v15H1z" fill={after ? '#fff' : '#cfe0f7'} />
      <path d="M0 15L14 .5" stroke="#8ba3c7" fill="none" />
      <path d="M0 15l3-4 2 4z" fill="#8ba3c7" />
    </svg>
  )
}

function SheetTabs() {
  return (
    <div className="flex min-w-0 grow overflow-hidden border-t border-[#8ba3c7] text-xs">
      {SHEET_TABS.map((t) => (
        <div key={t.name} className="flex shrink-0">
          <button
            type="button"
            className={clsx(
              'whitespace-nowrap leading-[15px]',
              t.active ? 'bg-linear-to-b from-white to-[#e3eefb] pl-1 font-bold' : 'bg-linear-to-b from-[#dce9fa] to-[#c2d8f6]',
              t.cut ? 'pl-1.5 text-left' : 'text-center',
              t.last && 'border-r border-[#8ba3c7]',
              t.width,
            )}
          >
            {t.name}
          </button>
          {!t.last && !t.cut && <Slash before={t.active} />}
        </div>
      ))}
    </div>
  )
}

function NavButton({ label, d }) {
  return (
    <button type="button" aria-label={label}>
      <Icon w={7} h={8}>
        <path d={d} fill="#15428b" />
      </Icon>
    </button>
  )
}

function TabStrip() {
  return (
    <div className="flex h-[17px] shrink-0 border-b border-[#5b7db1] bg-[#cfe0f7]">
      <div className="flex w-[62px] shrink-0 items-center gap-2 border-r border-t border-[#8ba3c7] pl-1.5">
        <NavButton label="Primo foglio" d="M0 0h1.500v8H0z M6 0v8L2 4z" />
        <NavButton label="Foglio precedente" d="M5 0v8L1 4z" />
        <NavButton label="Foglio successivo" d="M2 0v8l4-4z" />
        <NavButton label="Ultimo foglio" d="M5.500 0H7v8H5.500z M1 0v8l4-4z" />
      </div>
      <div className="flex min-w-0 grow-[1008] basis-0">
        <SheetTabs />
      </div>
      <div className="flex min-w-0 grow-[350] basis-0 items-stretch border-t border-[#688caf] bg-[#7b9bc7]">
        <span className="my-px w-1 shrink-0 border border-[#688caf] bg-white" />
        <button type="button" aria-label="Scorri a sinistra" className="flex w-[18px] items-center justify-center">
          <svg width="5" height="9" viewBox="0 0 5 9" aria-hidden="true"><path d="M5 0v9L0 4.500z" fill="#3f4a6d" /></svg>
        </button>
        <div className="flex grow-[257] basis-0 items-center justify-center gap-px rounded-[2px] border border-[#55658c] bg-linear-to-b from-[#f2f4f7] via-[#dfe5ec] to-[#b3c4d8]">
          <span className="h-[7px] w-px bg-[#7c8492]" />
          <span className="h-[7px] w-px bg-[#7c8492]" />
          <span className="h-[7px] w-px bg-[#7c8492]" />
          <span className="h-[7px] w-px bg-[#7c8492]" />
        </div>
        <div className="grow-[48] basis-0" />
        <button type="button" aria-label="Scorri a destra" className="flex w-4 items-center justify-center">
          <svg width="5" height="9" viewBox="0 0 5 9" aria-hidden="true"><path d="M0 0v9l5-4.500z" fill="#3f4a6d" /></svg>
        </button>
        <span className="my-px ml-1 w-1 shrink-0 border border-[#688caf] bg-white" />
      </div>
      <div className="w-5 bg-[#7b9bd0]" />
    </div>
  )
}

function StatusBar() {
  const bar = 'bg-linear-to-b from-[#e3effe] from-0% via-[#b4d0f6] via-40% to-[#d8e6f9]'
  return (
    <footer className="flex h-[22px] shrink-0 border-b-2 border-[#3b7bd8]">
      <div className={clsx('flex min-w-0 grow items-center', bar)}>
        <span className="flex h-full w-[51px] items-center border-r border-[#9bb8e0] pl-[7px]">Pronto</span>
        <button type="button" aria-label="Registra macro" className="flex h-full w-[34px] items-center border-r border-[#9bb8e0] pl-[9px]">
          <MacroIcon />
        </button>
      </div>
      <div className="flex shrink-0 items-center border-l border-[#5b7db1] bg-linear-to-b from-[#b8d3f7] from-0% via-[#85aee6] via-40% to-[#b5d0f5] pl-[5px] pr-1">
        <div className="flex h-[18px] items-stretch border border-[#7f9fd0] bg-[#c5d9f4]">
          <button type="button" aria-label="Normale" className="flex w-[18px] items-center justify-center bg-linear-to-b from-[#fbd08a] to-[#ffe690]">
            <Icon w={13} h={11}>
              <path d="M.5.500h12v10H.5z M.5 3.500h12M.5 7.500h12M4.500.5v10M8.500.5v10" fill="#fff" stroke="#555" />
            </Icon>
          </button>
          <button type="button" aria-label="Layout di pagina" className="flex w-[18px] items-center justify-center">
            <Icon w={13} h={12}>
              <path d="M.5.500h12v11H.5z" fill="#b9bec8" stroke="#666" />
              <path d="M3.500 2.500h6v8h-6z M5 5h3M5 7h3" fill="#fff" stroke="#666" />
            </Icon>
          </button>
          <button type="button" aria-label="Anteprima interruzioni" className="flex w-[18px] items-center justify-center">
            <Icon w={13} h={12}>
              <path d="M.5.500h12v11H.5z" fill="#b9bec8" stroke="#666" />
              <path d="M1 1h4v7H1z M7 1h3v7H7z" fill="#fff" stroke="#666" />
            </Icon>
          </button>
        </div>
        <span className="w-10 text-center">96%</span>
        <ZoomButton label="Zoom indietro" d="M5 8.500h7" />
        <input
          type="range"
          aria-label="Zoom"
          min="0"
          max="100"
          defaultValue="47"
          className="h-4 w-[101px] appearance-none bg-linear-to-b from-transparent from-44% via-[#e6effb] via-50% to-transparent to-56% [&::-webkit-slider-thumb]:h-3 [&::-webkit-slider-thumb]:w-[9px] [&::-webkit-slider-thumb]:appearance-none [&::-webkit-slider-thumb]:rounded-b-full [&::-webkit-slider-thumb]:border [&::-webkit-slider-thumb]:border-[#4a658f] [&::-webkit-slider-thumb]:bg-[#e9f1fb]"
        />
        <ZoomButton label="Zoom avanti" d="M5 8.500h7M8.500 5v7" />
      </div>
    </footer>
  )
}

function ZoomButton({ label, d }) {
  return (
    <button type="button" aria-label={label}>
      <Icon w={17} h={17}>
        <circle cx="8.500" cy="8.500" r="7" fill="#e9f0fa" stroke="#5f7aa5" strokeWidth="1.500" />
        <path d={d} stroke="#4a5b78" strokeWidth="2" />
      </Icon>
    </button>
  )
}

export default function App() {
  return (
    <div className="relative flex h-screen flex-col overflow-hidden bg-[#c5dbf8] font-['Open_Sans','Noto_Sans',sans-serif] text-[11px] leading-4 text-[#15428b]">
      <TitleBar />
      <RibbonTabs />
      <Ribbon />
      <SecurityBar />
      <FormulaBar />
      <div className="mt-0.5 flex min-h-0 flex-1 basis-0 border-t border-[#688caf]">
        <Sheet />
        <VerticalScroll />
      </div>
      <TabStrip />
      <StatusBar />
      <button type="button" aria-label="Pulsante Office" className="absolute left-px top-0.5">
        <OfficeLogo />
      </button>
    </div>
  )
}
